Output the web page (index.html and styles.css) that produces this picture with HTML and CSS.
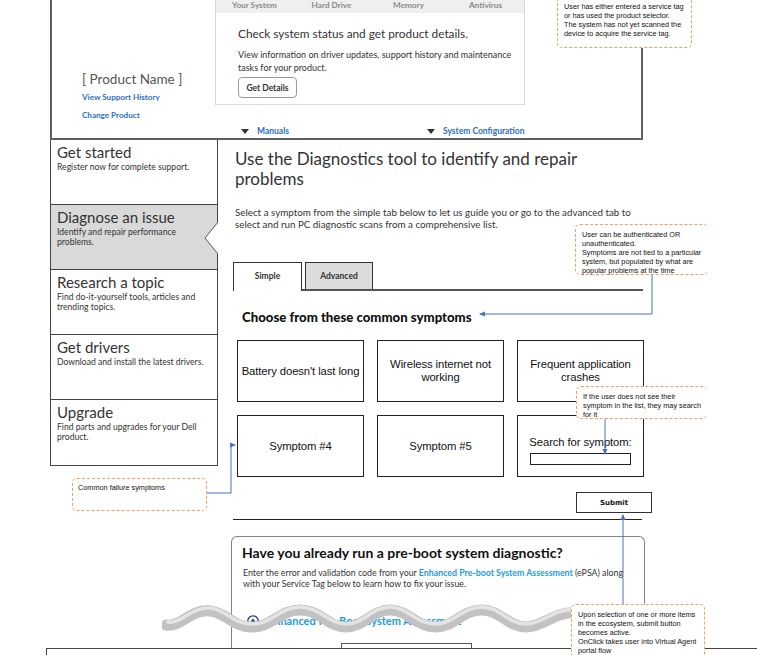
FILE: index.html
```html
<!DOCTYPE html>
<html lang="en">

<head>
    <meta charset="UTF-8">
    <meta name="viewport" content="width=device-width, initial-scale=1.0">
    <title>Diagnose an issue</title>
    <link rel="stylesheet" href="styles.css">
</head>

<body>
    <div class="page">
        <!-- Cabecera del producto -->
        <header class="product-bar">
            <div class="product-info">
                <div class="product-name">[ Product Name ]</div>
                <a class="small-link" href="#">View Support History</a>
                <a class="small-link" href="#">Change Product</a>
            </div>

            <div class="status-panel">
                <div class="status-tabs">
                    <span>Your System</span>
                    <span>Hard Drive</span>
                    <span>Memory</span>
                    <span>Antivirus</span>
                </div>
                <div class="status-body">
                    <h3>Check system status and get product details.</h3>
                    <p>View information on driver updates, support history and maintenance tasks for your product.</p>
                    <button class="details-btn">Get Details</button>
                </div>
            </div>

            <div class="quick-links">
                <a href="#"><span class="caret"></span>Manuals</a>
                <a href="#"><span class="caret"></span>System Configuration</a>
            </div>
        </header>

        <div class="support-body">
            <!-- Menu lateral -->
            <nav class="side-nav">
                <div class="nav-item">
                    <h4>Get started</h4>
                    <p>Register now for complete support.</p>
                </div>
                <div class="nav-item active">
                    <h4>Diagnose an issue</h4>
                    <p>Identify and repair performance problems.</p>
                    <svg class="notch" width="14" height="32" viewBox="0 0 14 32">
                        <polygon points="14,0 1,16 14,32" fill="#fff" />
                        <polyline points="14,0 1,16 14,32" fill="none" stroke="#555" stroke-width="1" />
                    </svg>
                </div>
                <div class="nav-item">
                    <h4>Research a topic</h4>
                    <p>Find do-it-yourself tools, articles and trending topics.</p>
                </div>
                <div class="nav-item">
                    <h4>Get drivers</h4>
                    <p>Download and install the latest drivers.</p>
                </div>
                <div class="nav-item">
                    <h4>Upgrade</h4>
                    <p>Find parts and upgrades for your Dell product.</p>
                </div>
            </nav>

            <!-- Contenido principal -->
            <main class="diagnostics">
                <h1>Use the Diagnostics tool to identify and repair problems</h1>
                <p class="intro">Select a symptom from the simple tab below to let us guide you or go to the advanced tab to select and run PC diagnostic scans from a comprehensive list.</p>

                <div class="tabs">
                    <div class="tab current">Simple</div>
                    <div class="tab">Advanced</div>
                </div>

                <h2>Choose from these common symptoms</h2>

                <div class="symptoms">
                    <div class="symptom">Battery doesn't last long</div>
                    <div class="symptom">Wireless internet not working</div>
                    <div class="symptom">Frequent application crashes</div>
                    <div class="symptom">Symptom #4</div>
                    <div class="symptom">Symptom #5</div>
                    <div class="symptom search">
                        <span>Search for symptom:</span>
                        <input type="text" class="search-input">
                    </div>
                </div>

                <button class="submit-btn">Submit</button>
                <div class="divider"></div>

                <section class="preboot">
                    <h2>Have you already run a pre-boot system diagnostic?</h2>
                    <p>Enter the error and validation code from your <span class="hl">Enhanced Pre-boot System Assessment</span> (ePSA) along with your Service Tag below to learn how to fix your issue.</p>
                    <div class="accordion">
                        <span class="circle-icon">
                            <svg width="12" height="12" viewBox="0 0 12 12">
                                <circle cx="6" cy="6" r="5.2" fill="#fff" stroke="#1f3b6e" stroke-width="1.3" />
                                <polygon points="6,3.3 8.7,7.6 3.3,7.6" fill="#1f3b6e" />
                            </svg>
                        </span>
                        <a href="#">Enhanced Pre-Boot System Assessment</a>
                    </div>
                    <div class="code-field"></div>
                </section>
            </main>
        </div>

        <div class="cut-box"></div>

        <!-- Corte del wireframe -->
        <svg class="tear" width="420" height="40" viewBox="0 0 420 40">
            <path d="M4 24 C20 26 28 8 48 10 C66 12 70 26 90 26 C110 26 118 9 138 9 C158 9 166 26 184 26 C202 26 210 9 228 9 C246 9 254 26 274 26 C292 26 300 9 320 9 C338 9 346 26 364 26 C382 26 392 10 414 12"
                fill="none" stroke="#c2c2c2" stroke-width="11" stroke-linecap="round" />
            <path d="M6 21 C20 23 28 6 48 7 C66 9 70 23 90 23 C110 23 118 6 138 6 C158 6 166 23 184 23 C202 23 210 6 228 6 C246 6 254 23 274 23 C292 23 300 6 320 6 C338 6 346 23 364 23 C382 23 392 7 412 9"
                fill="none" stroke="#e4e4e4" stroke-width="3.5" stroke-linecap="round" />
        </svg>

        <!-- Notas -->
        <div class="note note-tag">User has either entered a service tag<br>or has used the product selector.<br>The system has not yet scanned the<br>device to acquire the service tag.</div>
        <div class="note note-auth">User can be authenticated OR<br>unauthenticated.<br>Symptoms are not tied to a particular<br>system, but populated by what are<br>popular problems at the time</div>
        <div class="note note-search">If the user does not see their<br>symptom in the list, they may search<br>for it</div>
        <div class="note note-common">Common failure symptoms</div>
        <div class="note note-submit">Upon selection of one or more items<br>in the ecosystem, submit button<br>becomes active.<br>OnClick takes user into Virtual Agent<br>portal flow</div>

        <svg class="connectors" width="757" height="655" viewBox="0 0 757 655">
            <defs>
                <marker id="arrow" markerWidth="6" markerHeight="6" refX="5" refY="3" orient="auto">
                    <polygon points="0,0.5 6,3 0,5.5" fill="#4a72c0" />
                </marker>
            </defs>
            <polyline points="652,275 652,314 480,314" marker-end="url(#arrow)" />
            <polyline points="207,493 231,493 231,445 235,445" marker-end="url(#arrow)" />
            <polyline points="605,419 605,454" marker-end="url(#arrow)" />
            <polyline points="623,604 623,515" marker-end="url(#arrow)" />
        </svg>
    </div>
</body>

</html>
```

FILE: styles.css
```css
/* Estilos generales */
* {
    box-sizing: border-box;
    margin: 0;
    padding: 0;
}

body {
    font-family: Lato, 'Open Sans', sans-serif;
    background-color: #fff;
    color: #333;
    width: 757px;
    height: 655px;
    overflow: hidden;
}

a {
    text-decoration: none;
}

.page {
    position: relative;
    width: 757px;
    height: 655px;
}

/* Cabecera */
.product-bar {
    margin-left: 50px;
    width: 593px;
    height: 140px;
    border: 2px solid #5f5f5f;
    border-top: none;
    display: grid;
    grid-template-columns: 163px 310px;
    grid-template-rows: 105px 1fr;
}

.product-info {
    grid-row: 1 / 3;
    padding: 71px 0 0 30px;
}

.product-name {
    font-size: 13.5px;
    line-height: 16px;
    color: #555;
}

.small-link {
    display: block;
    font-size: 8.1px;
    font-weight: bold;
    line-height: 10px;
    color: #2b6fc2;
    margin-top: 5px;
}

.small-link + .small-link {
    margin-top: 8px;
}

.status-panel {
    border: 1px solid #d8d8d8;
    border-top: none;
}

.status-tabs {
    display: grid;
    grid-template-columns: repeat(4, 1fr);
    height: 13px;
    background-color: #efefef;
    font-size: 8.2px;
    font-weight: bold;
    line-height: 10px;
    color: #8b8b8b;
    text-align: center;
}

.status-body {
    padding: 13px 0 0 22px;
}

.status-body h3 {
    font-size: 11.8px;
    font-weight: normal;
    line-height: 16px;
    color: #333;
}

.status-body p {
    width: 280px;
    margin-top: 6px;
    font-size: 9px;
    line-height: 13px;
    color: #333;
}

.details-btn {
    margin-top: 3px;
    width: 59px;
    height: 21px;
    font-family: inherit;
    font-size: 8.5px;
    font-weight: bold;
    color: #333;
    background-color: #fff;
    border: 1px solid #9a9a9a;
    border-radius: 4px;
}

.quick-links {
    grid-column: 2;
    display: flex;
    padding: 19px 0 0 26px;
}

.quick-links a {
    display: flex;
    flex-shrink: 0;
    align-items: center;
    gap: 8px;
    width: 186px;
    font-size: 8.5px;
    font-weight: bold;
    line-height: 12px;
    color: #2b6fc2;
}

.caret {
    width: 0;
    height: 0;
    border-left: 4px solid transparent;
    border-right: 4px solid transparent;
    border-top: 5px solid #333;
}

/* Menu lateral */
.support-body {
    display: flex;
    align-items: flex-start;
}

.side-nav {
    margin-left: 50px;
    width: 168px;
    border: 1px solid #444;
    border-top: none;
}

.nav-item {
    position: relative;
    height: 65px;
    padding: 3px 0 0 6px;
    border-bottom: 1px solid #444;
}

.nav-item:last-child {
    border-bottom: none;
}

.nav-item.active {
    background-color: #d9d9d9;
}

.nav-item h4 {
    font-size: 15px;
    font-weight: normal;
    line-height: 18px;
    color: #333;
}

.nav-item p {
    margin-top: 1px;
    padding-right: 12px;
    font-size: 8.6px;
    line-height: 10px;
    color: #333;
}

.notch {
    position: absolute;
    right: -1px;
    top: 17px;
}

/* Contenido principal */
.diagnostics {
    width: 427px;
    padding: 9px 0 0 17px;
}

.diagnostics h1 {
    max-width: 380px;
    font-size: 17px;
    font-weight: normal;
    line-height: 20px;
    color: #333;
}

.intro {
    margin-top: 17px;
    font-size: 9.8px;
    line-height: 12px;
    color: #333;
}

.tabs {
    display: flex;
    gap: 3px;
    margin: 32px 0 0 -2px;
    width: 410px;
    height: 29px;
    border-bottom: 2px solid #555;
}

.tab {
    width: 68px;
    height: 27px;
    font-size: 8.5px;
    font-weight: bold;
    line-height: 26px;
    text-align: center;
    color: #333;
    background-color: #dcdcdc;
    border: 1.5px solid #333;
    border-bottom: none;
}

.tab.current {
    width: 69px;
    height: 29px;
    background-color: #fff;
    border: 1px solid #333;
    border-bottom: none;
}

.diagnostics h2 {
    margin: 18px 0 0 7px;
    font-size: 13.2px;
    font-weight: 900;
    line-height: 16px;
    color: #111;
}

.symptoms {
    display: grid;
    grid-template-columns: repeat(3, 127px);
    grid-auto-rows: 62px;
    column-gap: 13px;
    row-gap: 13px;
    margin: 15px 0 0 2px;
}

.symptom {
    display: flex;
    align-items: center;
    justify-content: center;
    font-family: 'Liberation Sans', Arial, sans-serif;
    font-size: 11.3px;
    line-height: 13px;
    letter-spacing: -0.1px;
    text-align: center;
    color: #111;
    border: 1px solid #222;
}

.symptom.search {
    flex-direction: column;
    padding-top: 8px;
}

.search-input {
    width: 101px;
    height: 12px;
    margin-top: 4px;
    border: 1px solid #222;
}

.submit-btn {
    display: block;
    margin: 15px 0 0 341px;
    width: 76px;
    height: 21px;
    font-family: 'DejaVu Sans', sans-serif;
    font-size: 7px;
    font-weight: bold;
    color: #111;
    background-color: #fff;
    border: 1.5px solid #333;
}

.divider {
    margin: 6px 0 0 -2px;
    width: 409px;
    border-top: 1px solid #222;
}

/* Panel de pre-boot */
.preboot {
    margin: 16px 0 0 -4px;
    width: 414px;
    height: 112px;
    overflow: hidden;
    padding: 8px 0 0 10px;
    border: 1.5px solid #7d8294;
    border-bottom: none;
    border-radius: 6px 6px 0 0;
}

.diagnostics .preboot h2 {
    margin: 0;
    font-size: 14px;
    font-weight: bold;
    line-height: 16px;
    color: #111;
}

.preboot p {
    margin: 6px 0 0 1px;
    padding-right: 14px;
    font-size: 8.8px;
    line-height: 11px;
    color: #333;
}

.preboot .hl {
    color: #1d9be0;
    font-weight: bold;
}

.accordion {
    display: flex;
    align-items: center;
    gap: 9px;
    margin: 25px 0 0 5px;
    height: 13px;
}

.circle-icon {
    display: flex;
}

.accordion a {
    font-size: 11px;
    font-weight: bold;
    color: #1d9be0;
}

.code-field {
    margin: 16px 0 0 99px;
    width: 131px;
    height: 20px;
    border: 1px solid #555;
}

.cut-box {
    margin-left: 46px;
    height: 20px;
    border-top: 1.5px solid #444;
    border-left: 1.5px solid #444;
}

.tear {
    position: absolute;
    left: 162px;
    top: 601px;
}

/* Notas */
.note {
    position: absolute;
    font-family: 'Liberation Sans', Arial, sans-serif;
    font-size: 7.3px;
    line-height: 9px;
    color: #111;
    white-space: nowrap;
    background-color: #fff;
    border: 1.5px dashed #f2a062;
    border-radius: 5px;
}

.note-tag {
    left: 557px;
    top: -12px;
    width: 135px;
    height: 60px;
    padding: 13px 0 0 6px;
}

.note-auth {
    left: 575px;
    top: 224px;
    width: 133px;
    height: 51px;
    padding: 5px 0 0 6px;
    border-right: none;
}

.note-search {
    left: 576px;
    top: 386px;
    width: 131px;
    height: 33px;
    padding: 5px 0 0 6px;
    border-right: none;
}

.note-common {
    left: 72px;
    top: 478px;
    width: 135px;
    height: 33px;
    padding: 4px 0 0 5px;
}

.note-submit {
    left: 571px;
    top: 604px;
    width: 134px;
    height: 60px;
    padding: 5px 0 0 6px;
}

.connectors {
    position: absolute;
    left: 0;
    top: 0;
    pointer-events: none;
}

.connectors polyline {
    fill: none;
    stroke: #4a72c0;
    stroke-width: 1;
}
```
